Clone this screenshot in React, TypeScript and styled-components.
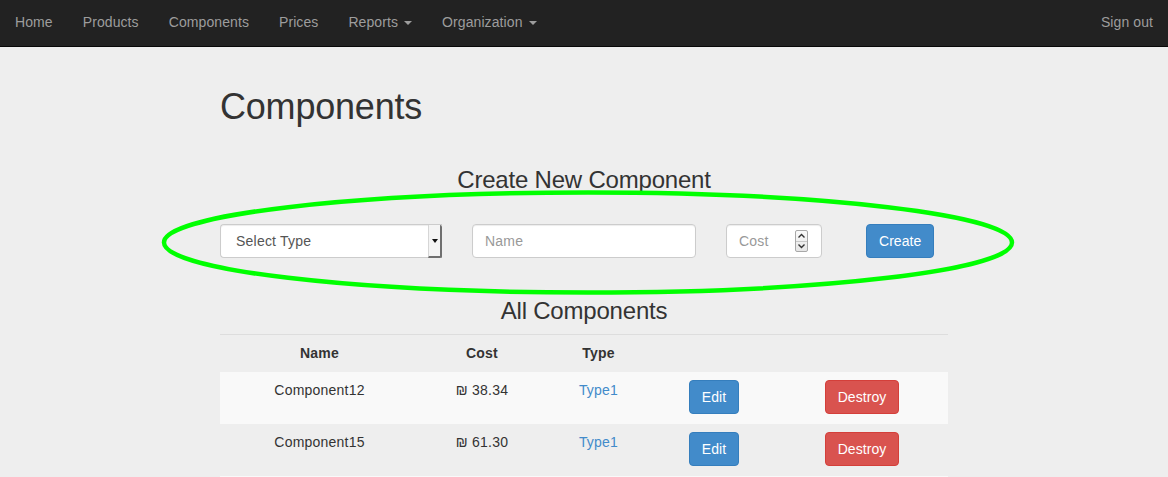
import React from "react";
import styled, { createGlobalStyle } from "styled-components";

const GlobalStyle = createGlobalStyle`
  html, body {
    margin: 0;
    padding: 0;
    background: #eeeeee;
    font-family: "Liberation Sans", Arial, Helvetica, sans-serif;
    font-size: 14px;
    line-height: 20px;
    letter-spacing: 0.22px;
    color: #333333;
  }
  * { box-sizing: border-box; }
`;

const Page = styled.div`
  position: relative;
  width: 1168px;
  min-height: 477px;
`;

const Navbar = styled.nav`
  display: flex;
  align-items: stretch;
  justify-content: space-between;
  height: 47px;
  background: #222222;
  border-bottom: 1px solid #080808;
`;

const NavGroup = styled.ul`
  display: flex;
  margin: 0;
  padding: 0;
  list-style: none;
`;

const NavLink = styled.li`
  display: flex;
  align-items: center;
  padding: 0 15px 2px;
  color: #9d9d9d;
  font-size: 14px;
  line-height: 20px;
  letter-spacing: 0.09px;
  cursor: pointer;
`;

const Caret = styled.span`
  display: inline-block;
  width: 0;
  height: 0;
  margin-left: 6px;
  margin-top: 2px;
  border-top: 4px solid #9d9d9d;
  border-left: 4px solid transparent;
  border-right: 4px solid transparent;
`;

const Main = styled.main`
  width: 728px;
  margin: 0 auto;
`;

const Title = styled.h1`
  margin: 40px 0 0;
  font-size: 36px;
  line-height: 39.6px;
  font-weight: 400;
  letter-spacing: -0.2px;
  color: #333;
`;

const SectionTitle = styled.h3<{ $top: number }>`
  margin: ${(p) => p.$top}px 0 0;
  font-size: 24px;
  line-height: 26.4px;
  font-weight: 400;
  letter-spacing: -0.2px;
  text-align: center;
  color: #333;
`;

const FormRow = styled.form`
  display: flex;
  align-items: center;
  margin-top: 31px;
`;

const Field = styled.div<{ $width: number; $gap?: number }>`
  display: flex;
  align-items: center;
  width: ${(p) => p.$width}px;
  height: 34px;
  margin-left: ${(p) => p.$gap ?? 0}px;
  background: #ffffff;
  border: 1px solid #cccccc;
  border-radius: 4px;
  box-shadow: inset 0 1px 1px rgba(0, 0, 0, 0.075);
  font-size: 14px;
  color: #999999;
`;

const SelectField = styled(Field)`
  border-right: none;
  border-radius: 4px 0 0 4px;
  color: #555555;
  padding-left: 15px;
`;

const FieldText = styled.span<{ $pad?: number }>`
  flex: 1;
  padding-left: ${(p) => p.$pad ?? 0}px;
  white-space: nowrap;
`;

const DropButton = styled.span`
  display: flex;
  align-items: center;
  justify-content: center;
  align-self: stretch;
  width: 14px;
  margin: 0 0 -1px;
  background: #f4f4f4;
  border-left: 1px solid #d6d6d6;
  border-right: 2px solid #6f6f6f;
  border-bottom: 2px solid #6f6f6f;
  border-radius: 0 2px 2px 0;
`;

const Arrow = styled.span`
  width: 0;
  height: 0;
  border-top: 4px solid #111;
  border-left: 3px solid transparent;
  border-right: 3px solid transparent;
`;

const Spinner = styled.span`
  display: flex;
  flex-direction: column;
  width: 13px;
  height: 22px;
  margin-right: 13px;
  border: 1px solid #a8a8a8;
  border-radius: 2px;
  background: linear-gradient(#fafafa, #e6e6e6);
`;

const SpinHalf = styled.span<{ $top?: boolean }>`
  flex: 1;
  display: flex;
  align-items: center;
  justify-content: center;
  border-bottom: ${(p) => (p.$top ? "1px solid #c8c8c8" : "none")};
`;

const Button = styled.button<{ $variant: "primary" | "danger"; $gap?: number }>`
  margin-left: ${(p) => p.$gap ?? 0}px;
  height: 34px;
  padding: 6px 12px;
  font-family: inherit;
  font-size: 14px;
  line-height: 20px;
  letter-spacing: 0.05px;
  color: #ffffff;
  border-radius: 4px;
  cursor: pointer;
  background: ${(p) => (p.$variant === "primary" ? "#428bca" : "#d9534f")};
  border: 1px solid ${(p) => (p.$variant === "primary" ? "#357ebd" : "#d43f3a")};
`;

const Table = styled.table`
  width: 728px;
  margin-top: 10px;
  border-collapse: collapse;
  table-layout: fixed;
`;

const Th = styled.th`
  padding: 8px;
  border-top: 1px solid #dddddd;
  font-weight: 700;
  text-align: center;
  vertical-align: top;
  color: #333;
`;

const Tr = styled.tr<{ $striped: boolean }>`
  background: ${(p) => (p.$striped ? "#f9f9f9" : "transparent")};
`;

const Td = styled.td`
  padding: 8px 8px 9px;
  border-top: 1px solid transparent;
  text-align: center;
  vertical-align: top;
`;

const TypeLink = styled.a`
  color: #428bca;
  text-decoration: none;
`;

const Annotation = styled.svg`
  position: absolute;
  left: 0;
  top: 0;
  pointer-events: none;
`;

const Chevron = ({ up }: { up?: boolean }) => (
  <svg width="9" height="6" viewBox="0 0 9 6">
    <path
      d={up ? "M1.5 4.5 L4.5 1.5 L7.5 4.5" : "M1.5 1.5 L4.5 4.5 L7.5 1.5"}
      fill="none"
      stroke="#333"
      strokeWidth="1.4"
    />
  </svg>
);

const rows = [
  { name: "Component12", cost: "₪ 38.34", type: "Type1" },
  { name: "Component15", cost: "₪ 61.30", type: "Type1" },
  { name: "", cost: "", type: "" },
];

export default function App() {
  return (
    <Page>
      <GlobalStyle />
      <Navbar>
        <NavGroup>
          <NavLink>Home</NavLink>
          <NavLink>Products</NavLink>
          <NavLink>Components</NavLink>
          <NavLink>Prices</NavLink>
          <NavLink>
            Reports <Caret />
          </NavLink>
          <NavLink>
            Organization <Caret />
          </NavLink>
        </NavGroup>
        <NavGroup>
          <NavLink>Sign out</NavLink>
        </NavGroup>
      </Navbar>
      <Main>
        <Title>Components</Title>
        <SectionTitle $top={40}>Create New Component</SectionTitle>
        <FormRow>
          <SelectField $width={222}>
            <FieldText>Select Type</FieldText>
            <DropButton>
              <Arrow />
            </DropButton>
          </SelectField>
          <Field $width={224} $gap={30}>
            <FieldText $pad={12}>Name</FieldText>
          </Field>
          <Field $width={96} $gap={30}>
            <FieldText $pad={12}>Cost</FieldText>
            <Spinner>
              <SpinHalf $top>
                <Chevron up />
              </SpinHalf>
              <SpinHalf>
                <Chevron />
              </SpinHalf>
            </Spinner>
          </Field>
          <Button type="button" $variant="primary" $gap={44}>
            Create
          </Button>
        </FormRow>
        <SectionTitle $top={40}>All Components</SectionTitle>
        <Table>
          <colgroup>
            <col style={{ width: 199 }} />
            <col style={{ width: 126 }} />
            <col style={{ width: 107 }} />
            <col style={{ width: 124 }} />
            <col style={{ width: 172 }} />
          </colgroup>
          <thead>
            <tr>
              <Th>Name</Th>
              <Th>Cost</Th>
              <Th>Type</Th>
              <Th></Th>
              <Th></Th>
            </tr>
          </thead>
          <tbody>
            {rows.map((r, i) => (
              <Tr key={i} $striped={i % 2 === 0}>
                <Td>{r.name}</Td>
                <Td>{r.cost}</Td>
                <Td>
                  <TypeLink href="#">{r.type}</TypeLink>
                </Td>
                <Td>
                  {r.name && (
                    <Button type="button" $variant="primary">
                      Edit
                    </Button>
                  )}
                </Td>
                <Td>
                  {r.name && (
                    <Button type="button" $variant="danger">
                      Destroy
                    </Button>
                  )}
                </Td>
              </Tr>
            ))}
          </tbody>
        </Table>
      </Main>
      <Annotation width="1168" height="477" viewBox="0 0 1168 477">
        <ellipse cx="588" cy="242.5" rx="424" ry="50" fill="none" stroke="#00ff00" strokeWidth="4.5" />
      </Annotation>
    </Page>
  );
}
